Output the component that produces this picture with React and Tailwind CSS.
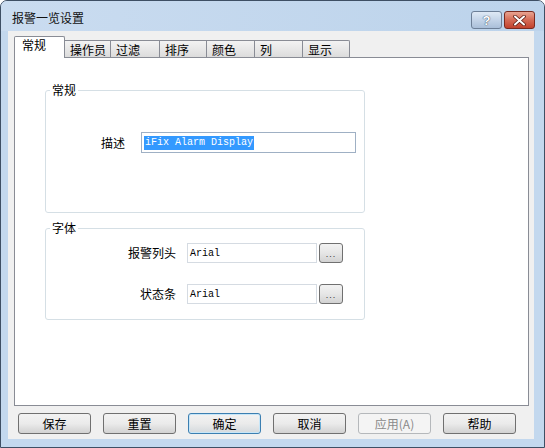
import React from 'react';

const tabs = [
  { label: '操作员', w: 'w-[46px]' },
  { label: '过滤', w: 'w-[49px]' },
  { label: '排序', w: 'w-[47px]' },
  { label: '颜色', w: 'w-[48px]' },
  { label: '列', w: 'w-[48px]' },
  { label: '显示', w: 'w-[47px]' },
];

const buttons = [
  { label: '保存' },
  { label: '重置' },
  { label: '确定', primary: true },
  { label: '取消' },
  { label: '应用(A)', disabled: true },
  { label: '帮助' },
];

function CaptionButtons() {
  return (
    <div className="flex items-start gap-[2px] self-start mt-[10px]">
      <div className="w-[31px] h-[18px] rounded-[3px] border border-[#6d7f97] bg-gradient-to-b from-[#dfe9f5] via-[#c4d4e8] to-[#aabfd9] flex items-center justify-center">
        <span className="text-[13px] font-bold leading-none text-white [text-shadow:0_0_1px_#3a4a60,0_0_1px_#3a4a60] font-['Liberation_Sans',sans-serif]">?</span>
      </div>
      <div className="w-[31px] h-[18px] rounded-[3px] border border-[#7a2a1f] bg-gradient-to-b from-[#e8a492] via-[#d46a55] to-[#c2412c] flex items-center justify-center">
        <svg width="13" height="11" viewBox="0 0 13 11">
          <path d="M2 1.5 L11 9.5 M11 1.5 L2 9.5" stroke="#5b1d14" strokeWidth="3.6" strokeLinecap="round" />
          <path d="M2 1.5 L11 9.5 M11 1.5 L2 9.5" stroke="#ffffff" strokeWidth="2" strokeLinecap="round" />
        </svg>
      </div>
    </div>
  );
}

function TextBox({ children, className }) {
  return (
    <div className={`bg-white border flex items-center pl-[2px] font-['Liberation_Mono',monospace] text-[10px] text-black ${className}`}>
      {children}
    </div>
  );
}

function DotsButton() {
  return (
    <div className="ml-[2px] w-[24px] h-[20px] rounded-[3px] border border-[#707070] bg-gradient-to-b from-[#f2f2f2] via-[#e6e6e6] to-[#d2d2d2] flex items-end justify-center pb-[3px]">
      <span className="text-[9px] leading-none tracking-[1px] text-[#333] font-['Liberation_Sans',sans-serif]">...</span>
    </div>
  );
}

function GroupBox({ title, className, children }) {
  return (
    <fieldset className={`ml-[30px] w-[320px] border border-[#d5dfe5] rounded-[3px] ${className}`}>
      <legend className="ml-[4px] px-[2px] leading-[16px]">{title}</legend>
      {children}
    </fieldset>
  );
}

export default function App() {
  return (
    <div className="w-[545px] h-[448px] flex flex-col bg-[#c3d8ee] border border-[#3e4f64] rounded-t-[7px] overflow-hidden font-['Noto_Sans_CJK_SC',sans-serif] text-[12px] text-black">
      {/* caption */}
      <div className="h-[30px] shrink-0 flex items-start pl-[11px] pr-[9px] bg-gradient-to-r from-[#cadcf0] to-[#bcd3eb]">
        <span className="mt-[9px] leading-[16px] text-[#111]">报警一览设置</span>
        <div className="flex-1" />
        <CaptionButtons />
      </div>

      {/* client area */}
      <div className="flex-1 ml-[7px] mr-[10px] mb-[8px] bg-[#f0f0f0] flex flex-col">
        <div className="ml-[6px] mr-[5px] mt-[5px] flex flex-col">
          {/* tab strip */}
          <div className="h-[22px] -mb-px flex items-end relative z-10">
            <div className="w-[51px] h-[22px] bg-white border border-b-0 border-[#898c95] rounded-t-[2px] pl-[7px] leading-[15px]">
              常规
            </div>
            {tabs.map((t, i) => (
              <div
                key={t.label}
                className={`${t.w} h-[17px] mb-px border-t border-r border-[#898c95] bg-gradient-to-b from-[#f3f3f3] to-[#dcdcdc] pl-[5px] pt-[1px] leading-[15px] ${i === tabs.length - 1 ? 'rounded-tr-[2px]' : ''}`}
              >
                {t.label}
              </div>
            ))}
          </div>

          {/* tab page */}
          <div className="h-[349px] bg-white border border-[#898c95] pt-[24px] flex flex-col">
            <GroupBox title="常规" className="h-[131px]">
              <div className="mt-[34px] flex items-center">
                <span className="w-[79px] text-right">描述</span>
                <TextBox className="ml-[16px] w-[215px] h-[21px] border-[#9fb0c4]">
                  <span className="bg-[#3399ff] text-white leading-[14px] px-[1px]">iFix Alarm Display</span>
                </TextBox>
              </div>
            </GroupBox>

            <GroupBox title="字体" className="h-[100px] mt-[7px]">
              <div className="mt-[7px] flex items-center">
                <span className="w-[130px] text-right">报警列头</span>
                <TextBox className="ml-[11px] w-[130px] h-[20px] border-[#d5dbe2]">Arial</TextBox>
                <DotsButton />
              </div>
              <div className="mt-[21px] flex items-center">
                <span className="w-[130px] text-right">状态条</span>
                <TextBox className="ml-[11px] w-[130px] h-[20px] border-[#d5dbe2]">Arial</TextBox>
                <DotsButton />
              </div>
            </GroupBox>
          </div>
        </div>

        {/* dialog buttons */}
        <div className="mt-[7px] ml-[10px] flex gap-[12px]">
          {buttons.map((b) => (
            <div
              key={b.label}
              className={`w-[73px] h-[21px] rounded-[3px] border flex items-center justify-center leading-[14px] ${
                b.disabled
                  ? 'border-[#b5b8bb] bg-[#f4f4f4] text-[#8a8a8a]'
                  : b.primary
                  ? 'border-[#3c7fb1] bg-gradient-to-b from-[#f2f2f2] via-[#ebebeb] to-[#d4d9dd] shadow-[inset_0_0_0_1px_#c7e6f8]'
                  : 'border-[#707070] bg-gradient-to-b from-[#f2f2f2] via-[#ebebeb] to-[#d2d2d2]'
              }`}
            >
              {b.label}
            </div>
          ))}
        </div>
      </div>
    </div>
  );
}
